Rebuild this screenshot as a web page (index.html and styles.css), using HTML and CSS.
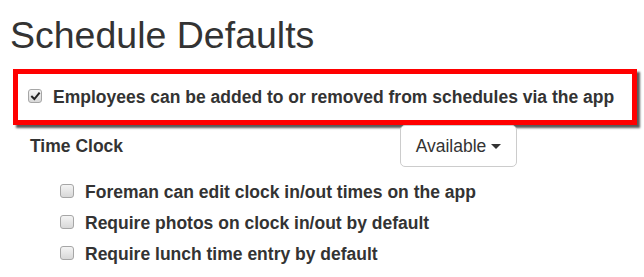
FILE: index.html
```html
<!DOCTYPE html>
<html>
<head>
<meta charset="utf-8">
<link rel="stylesheet" href="styles.css">
</head>
<body>
<div class="page">
  <h1 class="title">Schedule Defaults</h1>
  <div class="highlight">
    <label class="check-row">
      <span class="cb checked"><svg viewBox="0 0 12 12" width="11" height="11"><path d="M2.2 6.2 L4.8 8.8 L9.8 2.6" fill="none" stroke="#222" stroke-width="2.2" stroke-linecap="square"/></svg></span>
      <span class="label-text">Employees can be added to or removed from schedules via the app</span>
    </label>
  </div>
  <div class="clock-row">
    <span class="clock-label">Time Clock</span>
    <button class="dropdown">Available <span class="caret"></span></button>
  </div>
  <div class="options">
    <label class="check-row option"><span class="cb"></span><span class="label-text">Foreman can edit clock in/out times on the app</span></label>
    <label class="check-row option"><span class="cb"></span><span class="label-text">Require photos on clock in/out by default</span></label>
    <label class="check-row option"><span class="cb"></span><span class="label-text">Require lunch time entry by default</span></label>
  </div>
</div>
</body>
</html>
```
FILE: styles.css
```css
html, body {
  margin: 0;
  padding: 0;
  background: #fff;
}
body {
  font-family: "Liberation Sans", Arial, sans-serif;
  color: #333;
  font-size: 17.5px;
}
.page {
  padding: 15px 10px 0 10px;
}
.title {
  margin: 0;
  font-size: 37.5px;
  font-weight: 400;
  line-height: 41px;
  color: #333;
}
.highlight {
  margin: 13px 0 0 3px;
  width: 604px;
  height: 46px;
  border: 5px solid #ff0000;
  box-shadow: 3px 3px 2px rgba(0, 0, 0, 0.65);
  display: flex;
  align-items: center;
  padding-left: 10px;
}
.check-row {
  display: flex;
  align-items: center;
  font-weight: 700;
}
.cb {
  box-sizing: border-box;
  width: 14px;
  height: 14px;
  border: 1px solid #a6a6a6;
  border-radius: 3px;
  background: linear-gradient(#f4f4f4, #d8d8d8);
  display: flex;
  align-items: center;
  justify-content: center;
  flex: none;
}
.cb svg {
  display: block;
}
.highlight .cb {
  margin-right: 11px;
  margin-top: -2px;
}
.clock-row {
  display: flex;
  align-items: center;
  padding-left: 20px;
  margin-top: 0;
}
.clock-label {
  width: 370px;
  font-weight: 700;
}
.dropdown {
  font-family: "Liberation Sans", Arial, sans-serif;
  font-size: 17.5px;
  color: #333;
  background: #fff;
  border: 1px solid #ccc;
  border-radius: 5px;
  height: 42px;
  width: 117px;
  padding: 0;
  display: flex;
  align-items: center;
  justify-content: center;
}
.caret {
  display: inline-block;
  width: 0;
  height: 0;
  margin-left: 5px;
  border-top: 5px solid #333;
  border-left: 5px solid transparent;
  border-right: 5px solid transparent;
}
.options {
  margin-top: 10px;
  padding-left: 50px;
  display: flex;
  flex-direction: column;
}
.option {
  height: 31px;
}
.option .cb {
  margin-right: 11px;
  margin-top: -3px;
}
```
